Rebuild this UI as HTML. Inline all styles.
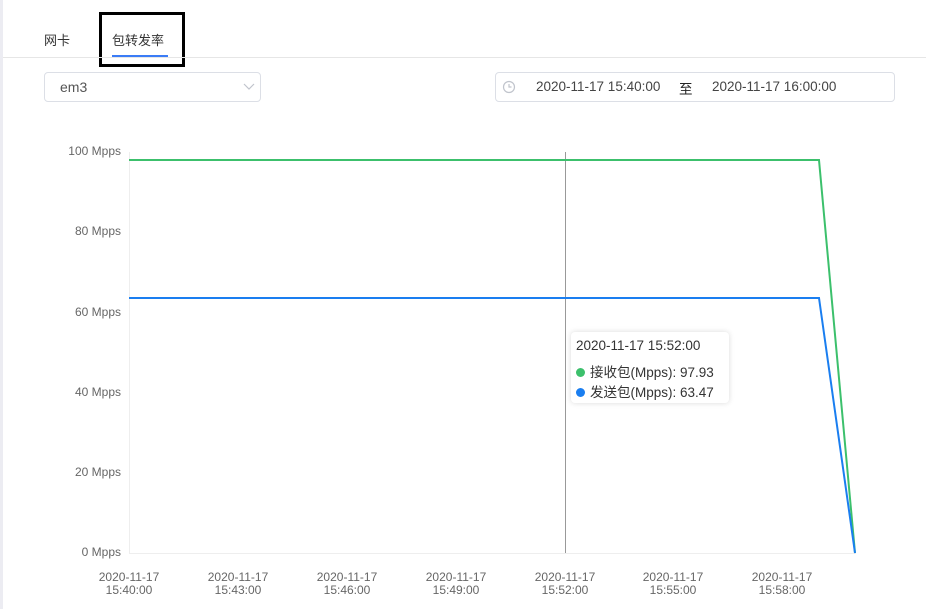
<!DOCTYPE html>
<html><head><meta charset="utf-8"><style>
body{margin:0;width:926px;height:609px;background:#fff;font-family:"Liberation Sans","Noto Sans CJK SC",sans-serif;position:relative;overflow:hidden}
.edge{position:absolute;left:0;top:0;width:3px;height:609px;background:#ececf2}
.tab{position:absolute;top:30px;font-size:13px;color:#333}
.sel{position:absolute;left:44px;top:72px;width:215px;height:28px;border:1px solid #dcdfe6;border-radius:4px}
.date{position:absolute;left:495px;top:72px;width:398px;height:28px;border:1px solid #dcdfe6;border-radius:4px;font-size:13.5px;color:#444}
.tt{position:absolute;left:571px;top:332px;width:158px;height:71px;background:#fff;border-radius:4px;box-shadow:0 0 6px rgba(0,0,0,.15);font-size:13.5px;color:#333}
.dot{display:inline-block;width:9px;height:9px;border-radius:50%;margin-right:5px}
</style></head><body>
<div class="edge"></div>
<div class="tab" style="left:44px">网卡</div>
<div class="tab" style="left:112px">包转发率</div>
<div style="position:absolute;left:112px;top:55px;width:56px;height:2px;background:#3b7cf6"></div>
<div style="position:absolute;left:99px;top:12px;width:86px;height:55px;border:3px solid #000;box-sizing:border-box;"></div>
<div style="position:absolute;left:3px;top:57px;width:923px;height:1px;background:#e6e6e6"></div>
<div class="sel"><span style="position:absolute;left:15px;top:6px;font-size:14px;color:#555">em3</span>
<svg style="position:absolute;left:198px;top:10px" width="12" height="8"><path d="M1 1L6 6L11 1" fill="none" stroke="#c0c4cc" stroke-width="1.2"/></svg></div>
<div class="date"><svg style="position:absolute;left:6px;top:7px" width="14" height="14"><circle cx="7" cy="7" r="5.5" fill="none" stroke="#c0c4cc" stroke-width="1.2"/><path d="M7 4V7H9.5" fill="none" stroke="#c0c4cc" stroke-width="1.2"/></svg>
<span style="position:absolute;left:40px;top:6px">2020-11-17 15:40:00</span>
<span style="position:absolute;left:183px;top:5px;color:#222">至</span>
<span style="position:absolute;left:216px;top:6px">2020-11-17 16:00:00</span></div>
<svg style="position:absolute;left:0;top:0" width="926" height="609" font-family="Liberation Sans" font-size="12" fill="#666">
<line x1="129.5" y1="152" x2="129.5" y2="553" stroke="#eee"/>
<line x1="129" y1="553.5" x2="856" y2="553.5" stroke="#eee"/>
<g text-anchor="end"><text x="121" y="155">100 Mpps</text><text x="121" y="235">80 Mpps</text><text x="121" y="316">60 Mpps</text><text x="121" y="396">40 Mpps</text><text x="121" y="476">20 Mpps</text><text x="121" y="556">0 Mpps</text></g>
<g text-anchor="middle">
<text x="129" y="581">2020-11-17</text><text x="129" y="594">15:40:00</text>
<text x="238" y="581">2020-11-17</text><text x="238" y="594">15:43:00</text>
<text x="347" y="581">2020-11-17</text><text x="347" y="594">15:46:00</text>
<text x="456" y="581">2020-11-17</text><text x="456" y="594">15:49:00</text>
<text x="565" y="581">2020-11-17</text><text x="565" y="594">15:52:00</text>
<text x="673" y="581">2020-11-17</text><text x="673" y="594">15:55:00</text>
<text x="782" y="581">2020-11-17</text><text x="782" y="594">15:58:00</text></g>
<line x1="565.5" y1="152" x2="565.5" y2="553" stroke="#999"/>
<polyline points="129,160 819,160 855,553" fill="none" stroke="#3cc06c" stroke-width="2"/>
<polyline points="129,298 819,298 855,553" fill="none" stroke="#1a7ef0" stroke-width="2"/>
</svg>
<div class="tt"><div style="position:absolute;left:5px;top:6px">2020-11-17 15:52:00</div>
<div style="position:absolute;left:5px;top:29px"><span class="dot" style="background:#3cc06c"></span>接收包(Mpps): 97.93</div>
<div style="position:absolute;left:5px;top:49px"><span class="dot" style="background:#1a7ef0"></span>发送包(Mpps): 63.47</div></div>
</body></html>
